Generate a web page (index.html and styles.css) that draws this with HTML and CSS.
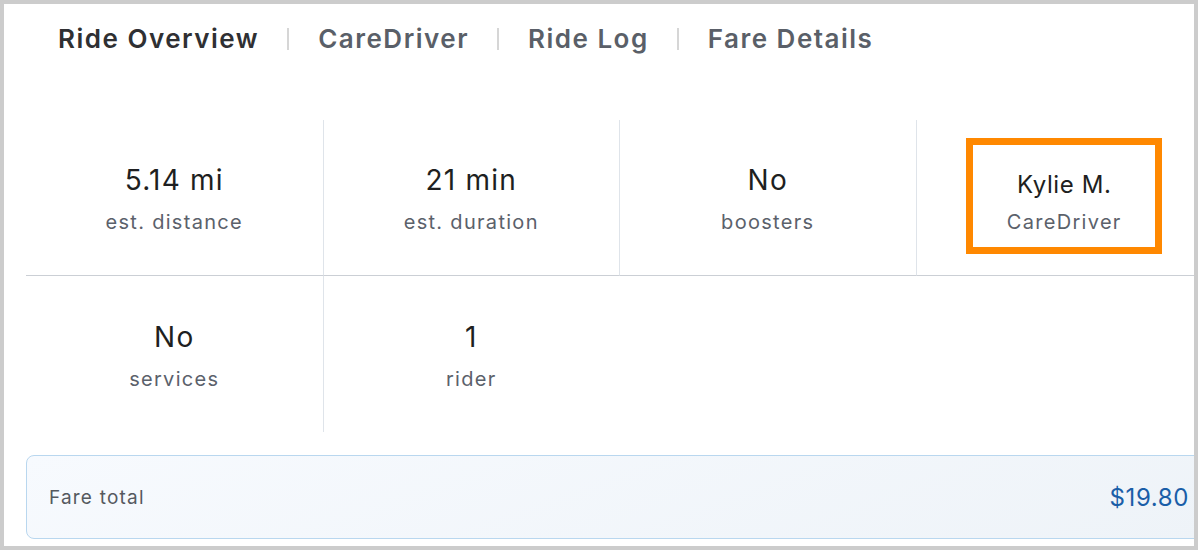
FILE: index.html
```
<!DOCTYPE html>
<html lang="en">
<head>
    <meta charset="UTF-8">
    <meta name="viewport" content="width=device-width, initial-scale=1.0">
    <title>Ride Overview</title>

    <link rel="stylesheet" href="styles.css">

</head>
<body>
    <div class="frame">
        <div class="tabs">
            <div class="tab active">Ride Overview</div>
            <div class="sep"></div>
            <div class="tab">CareDriver</div>
            <div class="sep"></div>
            <div class="tab">Ride Log</div>
            <div class="sep"></div>
            <div class="tab">Fare Details</div>
        </div>

        <div class="stats">
            <div class="stat">
                <div class="value">5.14 mi</div>
                <div class="label">est. distance</div>
            </div>
            <div class="stat">
                <div class="value">21 min</div>
                <div class="label">est. duration</div>
            </div>
            <div class="stat">
                <div class="value">No</div>
                <div class="label">boosters</div>
            </div>
            <div class="stat driver">
                <div class="value">Kylie M.</div>
                <div class="label">CareDriver</div>
                <div class="highlight"></div>
            </div>
            <div class="stat">
                <div class="value">No</div>
                <div class="label">services</div>
            </div>
            <div class="stat">
                <div class="value">1</div>
                <div class="label">rider</div>
            </div>
        </div>

        <div class="fare">
            <div class="fare-label">Fare total</div>
            <div class="fare-amount">$19.80</div>
        </div>
    </div>
</body>
</html>
```

FILE: styles.css
```
body{
    margin:0;
    padding:0;
    box-sizing: border-box;
    background-color: #cccccc;
    font-family: "Inter", "Noto Sans", sans-serif;
}

.frame{
    margin: 4px;
    height: 542px;
    background-color: white;
    overflow: hidden;
}

.tabs{
    display: flex;
    align-items: center;
    height: 69px;
    padding-left: 54px;
}

.tab{
    font-size: 26px;
    font-weight: 600;
    color: #5a5f68;
    letter-spacing: 1.5px;
}

.tab.active{
    color: #2f3033;
}

.sep{
    width: 2px;
    height: 22px;
    background-color: #d6d6d6;
    margin: 0 29px 0 28px;
}

.stats{
    display: grid;
    grid-template-columns: repeat(4, 296.5px);
    grid-template-rows: 156px 156px;
    width: 1186px;
    margin: 47px 0 0 22px;
}

.stat{
    position: relative;
    display: flex;
    flex-direction: column;
    align-items: center;
    justify-content: center;
    border-left: 1px solid #dfe4ea;
}

.stat:nth-child(4n+1){
    border-left: none;
}

.stat:nth-child(-n+4){
    border-bottom: 1px solid #cbcfd5;
}

.value{
    font-size: 28px;
    color: #1e1f21;
    letter-spacing: 1.2px;
    margin-top: 2px;
}

.label{
    font-size: 20px;
    color: #5b616b;
    letter-spacing: 1.3px;
    margin-top: 13px;
}

.driver .value{
    font-size: 24px;
    letter-spacing: 0.6px;
    margin-top: 8px;
}

.driver .label{
    margin-top: 11px;
}

.highlight{
    position: absolute;
    left: 49px;
    top: 18px;
    width: 182px;
    height: 102px;
    border: 7px solid #ff8800;
}

.fare{
    display: flex;
    justify-content: space-between;
    align-items: center;
    width: 1140px;
    height: 82px;
    margin: 23px 0 0 22px;
    padding: 0 22px;
    border: 1px solid #b9d7ef;
    border-radius: 8px;
    background: linear-gradient(160deg, #f7fafe, #eef3f8);
}

.fare-label{
    font-size: 19px;
    color: #55595f;
    letter-spacing: 1.2px;
}

.fare-amount{
    font-size: 24px;
    color: #1a5ea8;
    letter-spacing: 0.6px;
}
```
